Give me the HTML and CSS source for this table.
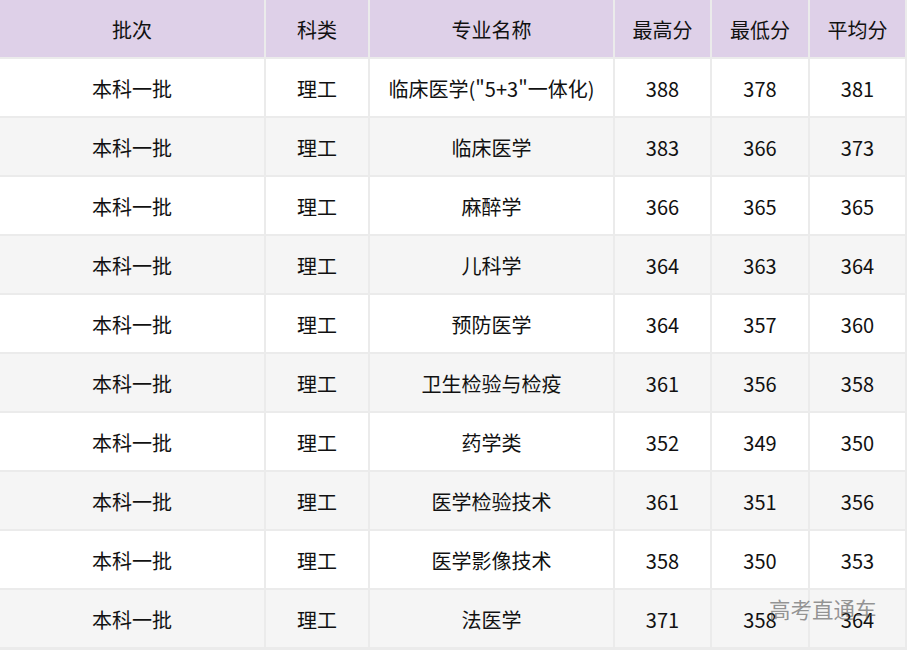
FILE: index.html
```html
<!DOCTYPE html>
<html lang="zh">
<head>
<meta charset="utf-8">
<link rel="stylesheet" href="styles.css">
</head>
<body>
<div class="wrap">
  <div class="grid">
    <div class="cell head">批次</div><div class="cell head">科类</div><div class="cell head">专业名称</div><div class="cell head">最高分</div><div class="cell head">最低分</div><div class="cell head">平均分</div>

    <div class="cell">本科一批</div><div class="cell">理工</div><div class="cell">临床医学("5+3"一体化)</div><div class="cell">388</div><div class="cell">378</div><div class="cell">381</div>

    <div class="cell alt">本科一批</div><div class="cell alt">理工</div><div class="cell alt">临床医学</div><div class="cell alt">383</div><div class="cell alt">366</div><div class="cell alt">373</div>

    <div class="cell">本科一批</div><div class="cell">理工</div><div class="cell">麻醉学</div><div class="cell">366</div><div class="cell">365</div><div class="cell">365</div>

    <div class="cell alt">本科一批</div><div class="cell alt">理工</div><div class="cell alt">儿科学</div><div class="cell alt">364</div><div class="cell alt">363</div><div class="cell alt">364</div>

    <div class="cell">本科一批</div><div class="cell">理工</div><div class="cell">预防医学</div><div class="cell">364</div><div class="cell">357</div><div class="cell">360</div>

    <div class="cell alt">本科一批</div><div class="cell alt">理工</div><div class="cell alt">卫生检验与检疫</div><div class="cell alt">361</div><div class="cell alt">356</div><div class="cell alt">358</div>

    <div class="cell">本科一批</div><div class="cell">理工</div><div class="cell">药学类</div><div class="cell">352</div><div class="cell">349</div><div class="cell">350</div>

    <div class="cell alt">本科一批</div><div class="cell alt">理工</div><div class="cell alt">医学检验技术</div><div class="cell alt">361</div><div class="cell alt">351</div><div class="cell alt">356</div>

    <div class="cell">本科一批</div><div class="cell">理工</div><div class="cell">医学影像技术</div><div class="cell">358</div><div class="cell">350</div><div class="cell">353</div>

    <div class="cell alt">本科一批</div><div class="cell alt">理工</div><div class="cell alt">法医学</div><div class="cell alt">371</div><div class="cell alt">358</div><div class="cell alt">364</div>
  </div>
  <div class="watermark">高考直通车</div>
</div>
</body>
</html>
```

FILE: styles.css
```css
html, body {
  margin: 0;
  padding: 0;
  background: #ffffff;
}
.wrap {
  position: relative;
  width: 907px;
  height: 650px;
  overflow: hidden;
  background: #ebebeb;
}
.grid {
  display: grid;
  grid-template-columns: 264px 102px 243px 95px 96px 95px;
  grid-auto-rows: 57px;
  gap: 2px;
  padding: 0 2px 2px 0;
  background: #ebebeb;
  font-family: "Noto Sans CJK SC", "Noto Sans", sans-serif;
  font-size: 20px;
  color: #111111;
}
.cell {
  display: flex;
  align-items: center;
  justify-content: center;
  background: #ffffff;
  white-space: nowrap;
  padding-top: 1px;
}
.cell.alt {
  background: #f5f5f5;
}
.cell.head {
  background: #ded0e8;
}
.watermark {
  position: absolute;
  left: 769px;
  top: 595px;
  font-family: "Noto Sans CJK SC", sans-serif;
  font-size: 21.5px;
  line-height: 28px;
  color: rgba(80, 80, 80, 0.6);
}
```
